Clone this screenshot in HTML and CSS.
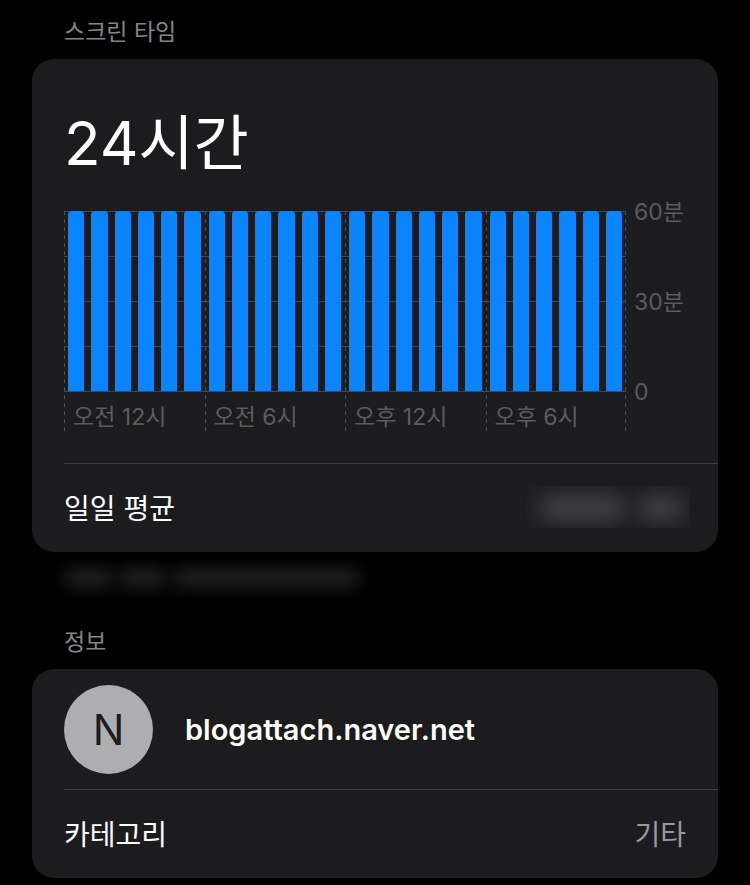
FILE: index.html
```
<!DOCTYPE html>
<html lang="ko">
<head>
    <meta charset="UTF-8">
    <meta name="viewport" content="width=device-width, initial-scale=1.0">
    <title>스크린 타임</title>
    <link rel="stylesheet" href="styles.css">
</head>
<body>
    <main>
        <h2 class="section-title">스크린 타임</h2>
        <section class="card">
            <div class="usage">
                <p class="total">24시간</p>
                <div class="chart">
                    <div class="plot">
                        <div class="quarter">
                            <div class="bars"><i></i><i></i><i></i><i></i><i></i><i></i></div>
                            <span class="hour">오전 12시</span>
                        </div>
                        <div class="quarter">
                            <div class="bars"><i></i><i></i><i></i><i></i><i></i><i></i></div>
                            <span class="hour">오전 6시</span>
                        </div>
                        <div class="quarter">
                            <div class="bars"><i></i><i></i><i></i><i></i><i></i><i></i></div>
                            <span class="hour">오후 12시</span>
                        </div>
                        <div class="quarter">
                            <div class="bars"><i></i><i></i><i></i><i></i><i></i><i></i></div>
                            <span class="hour">오후 6시</span>
                        </div>
                    </div>
                    <div class="scale">
                        <span>60분</span>
                        <span>30분</span>
                        <span>0</span>
                    </div>
                </div>
            </div>
            <div class="row">
                <span>일일 평균</span>
                <span class="hidden-value"><b></b><b></b></span>
            </div>
        </section>
        <div class="hidden-note"><b></b><b></b><b></b></div>

        <h2 class="section-title">정보</h2>
        <section class="card">
            <div class="site">
                <span class="avatar">N</span>
                <strong>blogattach.naver.net</strong>
            </div>
            <div class="row">
                <span>카테고리</span>
                <span class="value">기타</span>
            </div>
        </section>
    </main>
</body>
</html>
```
FILE: styles.css
```
body {
    margin: 0;
    background-color: #000;
    color: #fff;
    font-family: Inter, 'Noto Sans CJK KR', sans-serif;
    font-size: 28px;
}

main {
    padding: 16px 32px 7px;
}

.section-title {
    margin: 0;
    padding: 0 32px 11px;
    font-size: 23px;
    line-height: 32px;
    font-weight: 400;
    color: #85858b;
}

.card {
    background-color: #1c1c1e;
    border-radius: 22px;
    overflow: hidden;
}

.usage {
    padding: 44px 32px 31px;
}

.total {
    margin: 0 0 28px;
    font-size: 60px;
    line-height: 80px;
}

.chart {
    display: grid;
    grid-template-columns: 1fr 60px;
    color: #5b5b5f;
    font-size: 23px;
}

.plot {
    display: flex;
    background: repeating-linear-gradient(#47474a 0 1px, transparent 1px 45px) 0 0 / 100% 181px no-repeat;
}

/* dashed divider every six hours */
.quarter {
    flex: 1;
    background: repeating-linear-gradient(#505053 0 4px, transparent 4px 8px) 0 0 / 1px 100% no-repeat;
}

.quarter:last-child {
    background: repeating-linear-gradient(#505053 0 4px, transparent 4px 8px) 0 0 / 1px 100% no-repeat,
        repeating-linear-gradient(#505053 0 4px, transparent 4px 8px) 100% 0 / 1px 100% no-repeat;
}

.bars {
    display: flex;
    gap: 7px;
    height: 180px;
    padding: 0 4px;
}

.bars i {
    flex: 1;
    background-color: #0a84ff;
    border-radius: 4px 4px 0 0;
}

.hour {
    display: block;
    padding: 11px 0 0 9px;
    line-height: 30px;
}

.scale {
    display: flex;
    flex-direction: column;
    justify-content: space-between;
    height: 212px;
    margin-top: -15px;
    padding-left: 8px;
    line-height: 32px;
}

.row {
    display: flex;
    justify-content: space-between;
    align-items: center;
    height: 85px;
    margin-left: 32px;
    padding: 0 32px 3px 0;
    border-top: 1px solid #3d3d41;
}

.value {
    color: #98989f;
}

/* blurred out figures */
.hidden-value,
.hidden-note {
    display: flex;
    overflow: hidden;
}

.hidden-value {
    gap: 16px;
    width: 140px;
    height: 24px;
    margin-right: -3px;
    padding: 10px 8px 8px 14px;
    background-color: #1e1e20;
}

.hidden-value b {
    flex: 1;
    background-color: #424247;
    filter: blur(10px);
}

.hidden-value b:first-child {
    flex: 2;
}

.hidden-note {
    gap: 8px;
    width: 292px;
    height: 18px;
    margin: 7px 0 29px 24px;
    padding: 10px;
}

.hidden-note b {
    flex: 1;
    background-color: #222224;
    filter: blur(8px);
}

.hidden-note b:last-child {
    flex: 4;
}

.site {
    display: flex;
    align-items: center;
    gap: 32px;
    padding: 16px 32px 15px;
}

.site strong {
    font-size: 29px;
    font-weight: 600;
}

.avatar {
    display: flex;
    justify-content: center;
    align-items: center;
    width: 89px;
    height: 89px;
    border-radius: 50%;
    background-color: #aeaeb0;
    color: #1c1c1e;
    font-size: 42px;
}
```
